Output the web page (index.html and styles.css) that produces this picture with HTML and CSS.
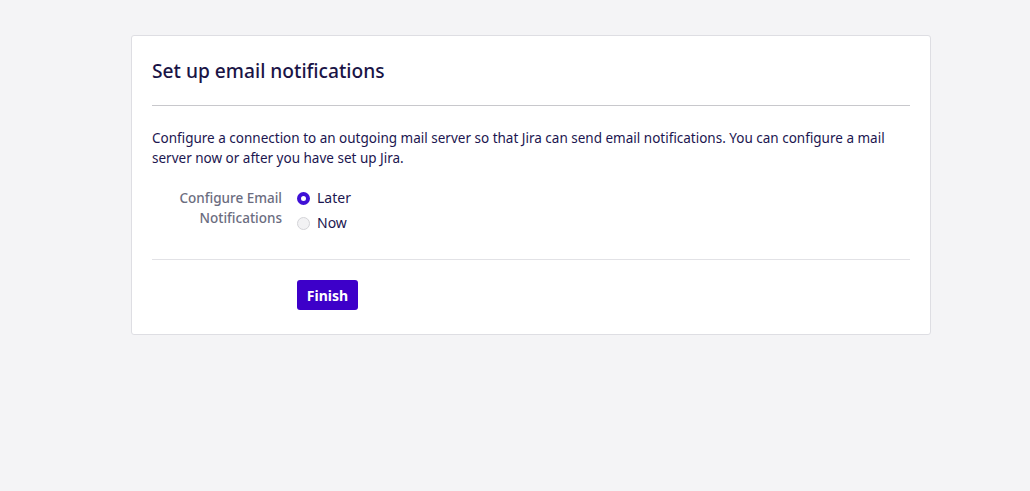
FILE: index.html
```html
<!DOCTYPE html>
<html>
<head>
<meta charset="utf-8">
<link rel="stylesheet" href="styles.css">
</head>
<body>
<div class="page">
  <div class="card">
    <h1 class="title">Set up email notifications</h1>
    <div class="rule"></div>
    <p class="desc">Configure a connection to an outgoing mail server so that Jira can send email notifications. You can configure a mail server now or after you have set up Jira.</p>
    <div class="field">
      <div class="label">Configure Email Notifications</div>
      <div class="options">
        <label class="opt"><span class="radio checked"></span>Later</label>
        <label class="opt"><span class="radio"></span>Now</label>
      </div>
    </div>
    <div class="rule light"></div>
    <div class="actions">
      <button class="btn">Finish</button>
    </div>
  </div>
</div>
</body>
</html>
```

FILE: styles.css
```css
html, body {
  margin: 0;
  padding: 0;
  background: #f4f4f6;
  font-family: "Noto Sans", "Open Sans", sans-serif;
  color: #1c1650;
}
.page {
  padding-top: 35px;
  padding-left: 131px;
}
.card {
  width: 758px;
  background: #fff;
  border: 1px solid #dedee3;
  border-radius: 3px;
  padding: 0 20px 24px;
}
.title {
  margin: 0;
  padding-top: 22px;
  height: 48px;
  box-sizing: border-box;
  font-size: 19.2px;
  font-weight: 500;
  line-height: 26px;
  color: #1a1446;
}
.rule {
  height: 1px;
  background: #c8c8cc;
  margin-top: 21px;
}
.rule.light {
  background: #e2e2e6;
  margin-top: 26px;
}
.desc {
  margin: 22px 0 0;
  font-size: 13.5px;
  line-height: 20px;
  color: #1c1650;
}
.field {
  display: flex;
  margin-top: 20px;
}
.label {
  width: 130px;
  text-align: right;
  font-size: 13.5px;
  line-height: 20px;
  font-weight: 500;
  color: #6b6d80;
  padding-left: 10px;
  box-sizing: border-box;
}
.options {
  margin-left: 15px;
  display: flex;
  flex-direction: column;
  gap: 5px;
}
.opt {
  display: flex;
  align-items: center;
  font-size: 14px;
  line-height: 20px;
  color: #1c1650;
}
.radio {
  width: 11px;
  height: 11px;
  border: 1px solid #d4d4d8;
  border-radius: 50%;
  background: #f2f2f4;
  margin-right: 7px;
  box-sizing: content-box;
}
.radio.checked {
  border: 4px solid #3f10d6;
  width: 5px;
  height: 5px;
  background: #fff;
}
.actions {
  padding-left: 145px;
  margin-top: 20px;
}
.btn {
  display: block;
  height: 30px;
  width: 61px;
  background: #3d00c9;
  color: #fff;
  border: none;
  border-radius: 3px;
  font-family: inherit;
  font-size: 14px;
  font-weight: 700;
  padding: 0;
}
```
